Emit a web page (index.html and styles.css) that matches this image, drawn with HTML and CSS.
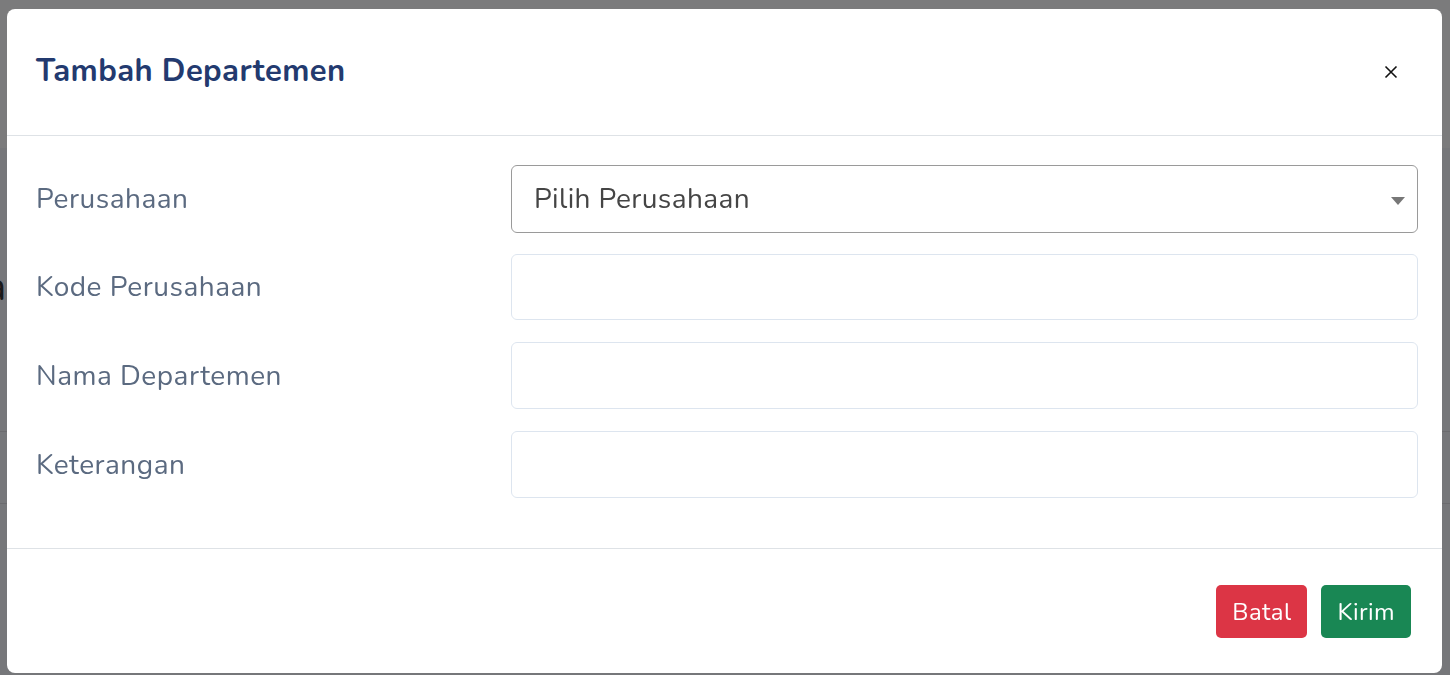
FILE: index.html
```html
<!DOCTYPE html>
<html lang="id">
<head>
<meta charset="utf-8">
<title>Tambah Departemen</title>
<link rel="stylesheet" href="styles.css">
</head>
<body>
<div class="page">
  <div class="page-head"><span class="page-title">Departemen</span></div>
  <div class="page-sub">Data</div>
  <div class="page-line line-a"></div>
  <div class="page-line line-b"></div>
</div>
<div class="backdrop"></div>
<div class="modal">
  <div class="modal-header">
    <h5 class="modal-title">Tambah Departemen</h5>
    <button class="btn-close" type="button" aria-label="Close">
      <svg width="14" height="14" viewBox="0 0 14 14"><path d="M1.5 1.5 L12.5 12.5 M12.5 1.5 L1.5 12.5" stroke="#111" stroke-width="1.6" fill="none"/></svg>
    </button>
  </div>
  <div class="modal-body">
    <div class="form-row">
      <label class="form-label">Perusahaan</label>
      <div class="select">
        <span>Pilih Perusahaan</span>
        <svg class="caret" width="14" height="8" viewBox="0 0 14 8"><path d="M0 0 H14 L7 8 Z" fill="#777"/></svg>
      </div>
    </div>
    <div class="form-row">
      <label class="form-label">Kode Perusahaan</label>
      <div class="input input-sm"></div>
    </div>
    <div class="form-row">
      <label class="form-label">Nama Departemen</label>
      <div class="input"></div>
    </div>
    <div class="form-row">
      <label class="form-label">Keterangan</label>
      <div class="input"></div>
    </div>
  </div>
  <div class="modal-footer">
    <button class="btn btn-danger" type="button">Batal</button>
    <button class="btn btn-success" type="button">Kirim</button>
  </div>
</div>
</body>
</html>
```
FILE: styles.css
```css
* { box-sizing: border-box; }
html, body { margin: 0; padding: 0; }
body {
  width: 1450px;
  height: 675px;
  overflow: hidden;
  background: #eceef4;
  font-family: Nunito, "Open Sans", sans-serif;
}
.page-head {
  height: 145px;
  background: #f6f6f8;
  padding-top: 148px;
}
.page-title {
  display: block;
  margin-left: -260px;
  font-size: 40px;
  font-weight: 800;
  color: #1e2d5c;
  line-height: 40px;
}
.page-sub {
  margin-left: -80px;
  margin-top: 112px;
  font-size: 40px;
  color: #333;
}
.page-line {
  height: 1px;
  background: #d6d7dc;
}
.line-a { margin-top: 117px; }
.line-b { margin-top: 71px; }
.backdrop {
  position: fixed;
  inset: 0;
  background: rgba(0, 0, 0, 0.5);
}
.modal {
  position: fixed;
  left: 7px;
  top: 9px;
  width: 1435px;
  height: 664px;
  background: #fff;
  border-radius: 8px;
  display: flex;
  flex-direction: column;
}
.modal-header {
  height: 127px;
  border-bottom: 1px solid #dee2e6;
  display: flex;
  align-items: center;
  justify-content: space-between;
  padding: 0 44px 0 29px;
}
.modal-title {
  margin: 0;
  font-size: 31px;
  font-weight: 700;
  letter-spacing: 0.4px;
  color: #233a6f;
  line-height: 1.2;
}
.btn-close {
  border: 0;
  background: transparent;
  padding: 0;
  width: 14px;
  height: 14px;
  display: flex;
}
.modal-body {
  padding: 29px 24px 50px 29px;
  display: flex;
  flex-direction: column;
  border-bottom: 1px solid #dee2e6;
}
.form-row {
  display: grid;
  grid-template-columns: 475px 1fr;
  align-items: center;
  margin-top: 22px;
}
.form-row:first-child { margin-top: 0; }
.form-row:nth-child(2) { margin-top: 21px; }
.form-label {
  font-size: 28px;
  letter-spacing: 0.5px;
  color: #5b6a80;
}
.select {
  height: 68px;
  border: 1px solid #9a9a9a;
  border-radius: 6px;
  display: flex;
  align-items: center;
  justify-content: space-between;
  padding: 0 12px 0 22px;
  font-size: 28px;
  letter-spacing: 0.4px;
  color: #454545;
}
.caret { margin-top: 4px; }
.input {
  height: 67px;
  border: 1px solid #dde5ef;
  border-radius: 6px;
}
.input-sm { height: 66px; }
.modal-footer {
  display: flex;
  justify-content: flex-end;
  gap: 14px;
  padding: 36px 31px 0 0;
}
.btn {
  height: 53px;
  border: 0;
  border-radius: 5px;
  color: #fff;
  font-family: inherit;
  font-size: 24px;
  letter-spacing: 0.4px;
  padding: 0 16px;
}
.btn-danger { background: #dc3545; }
.btn-success { background: #198754; }
```
